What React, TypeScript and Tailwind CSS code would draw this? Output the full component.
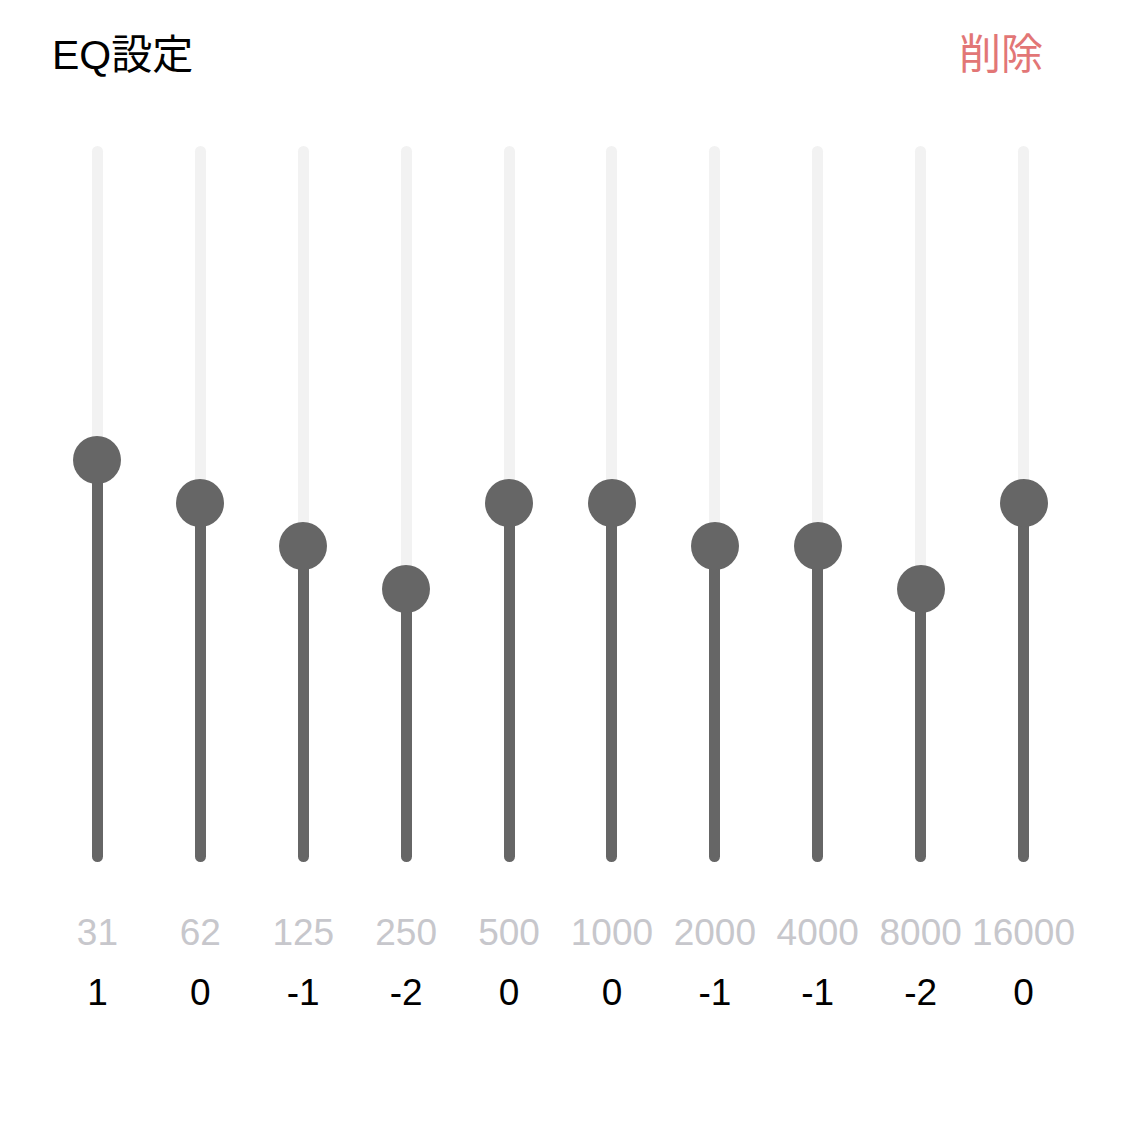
import React from "react";

type Band = { freq: number; gain: number };

const bands: Band[] = [
  { freq: 31, gain: 1 },
  { freq: 62, gain: 0 },
  { freq: 125, gain: -1 },
  { freq: 250, gain: -2 },
  { freq: 500, gain: 0 },
  { freq: 1000, gain: 0 },
  { freq: 2000, gain: -1 },
  { freq: 4000, gain: -1 },
  { freq: 8000, gain: -2 },
  { freq: 16000, gain: 0 },
];

// track geometry (px)
const TRACK_H = 716;
const ZERO_Y = 357;
const STEP = 43;
const THUMB = 48;

function Slider({ gain }: { gain: number }) {
  const center = ZERO_Y - gain * STEP;
  return (
    <div className="relative h-[716px] w-[11px] rounded-full bg-[#f2f2f2]">
      <div
        className="absolute bottom-0 left-0 w-full rounded-full bg-[#666666]"
        style={{ height: TRACK_H - center }}
      />
      <div
        className="absolute left-1/2 h-[48px] w-[48px] -translate-x-1/2 rounded-full bg-[#666666]"
        style={{ top: center - THUMB / 2 }}
      />
    </div>
  );
}

export default function App() {
  return (
    <div
      className="h-[1124px] w-[1124px] bg-white"
      style={{ fontFamily: '"Liberation Sans", "Noto Sans CJK JP", sans-serif' }}
    >
      {/* header */}
      <div className="flex items-center justify-between pl-[52px] pr-[81px] pt-[34px]">
        <h1 className="text-[41px] leading-none text-black">EQ設定</h1>
        <button className="text-[42px] leading-none text-[#e27676]">削除</button>
      </div>

      {/* bands */}
      <div className="mt-[70px] grid grid-cols-10 pl-[46px] pr-[49px]">
        {bands.map((b) => (
          <div key={b.freq} className="flex min-w-0 flex-col items-center">
            <Slider gain={b.gain} />
            <div className="mt-[49px] w-full overflow-hidden whitespace-nowrap text-center text-[37px] leading-[1.2] text-[#c7c7cc]">
              {b.freq}
            </div>
            <div className="mt-[19px] text-[37px] leading-none text-black">{b.gain}</div>
          </div>
        ))}
      </div>
    </div>
  );
}
